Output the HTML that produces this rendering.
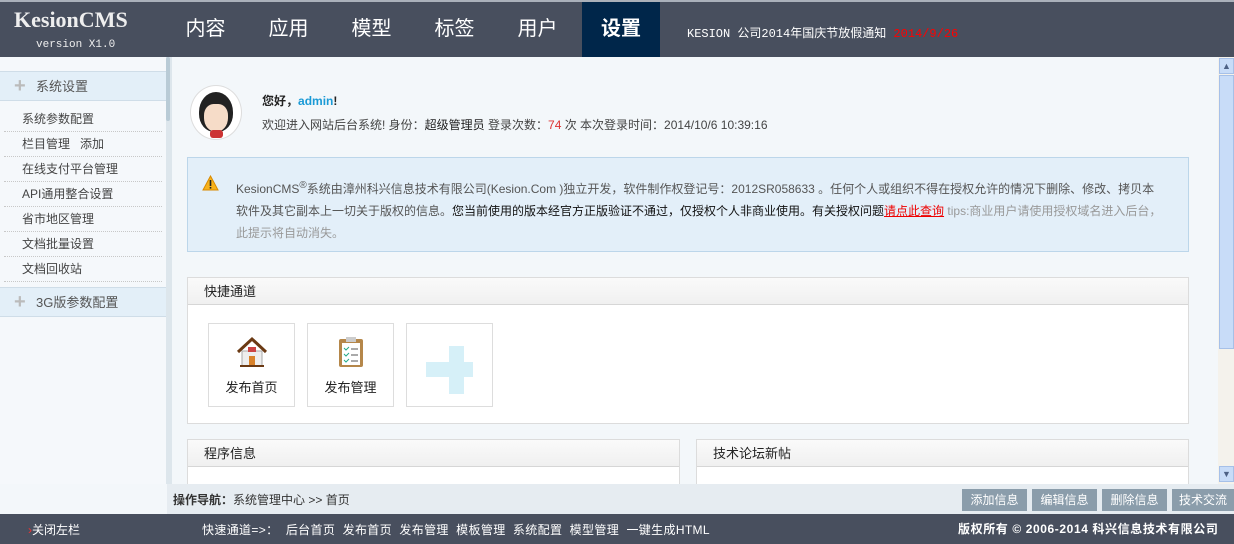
<!DOCTYPE html>
<html><head><meta charset="utf-8">
<style>
*{margin:0;padding:0;box-sizing:border-box}
body{width:1234px;height:544px;overflow:hidden;position:relative;background:#f3f7fa;font-family:"Liberation Sans","Noto Sans CJK SC","WenQuanYi Zen Hei",sans-serif;font-size:12px;color:#333}
.abs{position:absolute}
#top{left:0;top:0;width:1234px;height:57px;background:#484f5e;border-top:2px solid #aab0ba}
.nav{top:0;height:55px;line-height:55px;color:#fff;font-size:20px;text-align:center;width:83px}
#side{left:0;top:57px;width:167px;height:427px;background:#f5f8fb}
.sh{left:0;width:166px;height:30px;line-height:30px;background:#e3eff8;border-top:1px solid #cfdde8;border-bottom:1px solid #cfdde8;font-size:13px;color:#555;padding-left:36px}
.sh:before{content:"+";position:absolute;left:14px;top:-1px;color:#bbb;font-size:20px;font-weight:bold}
.si{left:4px;width:158px;height:25px;line-height:24px;padding-left:18px;border-bottom:1px dotted #c8c8c8;color:#444}
.box{background:#fff;border:1px solid #dcdcdc}
.bh{height:27px;line-height:27px;background:linear-gradient(#fafafa,#f0f0f0);border-bottom:1px solid #d6d6d6;padding-left:16px;font-size:13px;color:#222}
.q{top:323px;width:87px;height:84px;border:1px solid #ddd;background:#fff;text-align:center;font-size:13px;color:#222}
.btn{top:489px;height:22px;line-height:22px;width:65px;background:#8b9dab;color:#fff;text-align:center}
</style></head><body>
<div id="top" class="abs">
 <div class="abs" style="left:14px;top:5px;color:#eee;font-family:'Liberation Serif',serif;font-weight:bold;font-size:22px">KesionCMS</div>
 <div class="abs" style="left:36px;top:37px;color:#eee;font-family:'Liberation Mono',monospace;font-size:11px">version X1.0</div>
 <div class="abs nav" style="left:164px">内容</div>
 <div class="abs nav" style="left:247px">应用</div>
 <div class="abs nav" style="left:330px">模型</div>
 <div class="abs nav" style="left:413px">标签</div>
 <div class="abs nav" style="left:496px">用户</div>
 <div class="abs nav" style="left:582px;width:78px;background:#00264a;font-weight:bold">设置</div>
 <div class="abs" style="left:687px;top:22px;color:#fff;font-size:12px;font-family:'Liberation Mono','Noto Sans CJK SC',monospace">KESION 公司2014年国庆节放假通知 <span style="color:#f00">2014/9/26</span></div>
</div>
<div id="side" class="abs">
 <div class="abs sh" style="top:14px">系统设置</div>
 <div class="abs si" style="top:50px">系统参数配置</div>
 <div class="abs si" style="top:75px">栏目管理 &nbsp; 添加</div>
 <div class="abs si" style="top:100px">在线支付平台管理</div>
 <div class="abs si" style="top:125px">API通用整合设置</div>
 <div class="abs si" style="top:150px">省市地区管理</div>
 <div class="abs si" style="top:175px">文档批量设置</div>
 <div class="abs si" style="top:200px">文档回收站</div>
 <div class="abs sh" style="top:230px">3G版参数配置</div>
</div>
<div class="abs" style="left:166px;top:57px;width:6px;height:427px;background:#dde6ec"></div>
<div class="abs" style="left:166px;top:57px;width:4px;height:64px;background:#b9cbd6;border-radius:2px"></div>
<div class="abs" style="left:190px;top:85px;width:52px;height:55px;border-radius:50%;background:#fff;border:1px solid #ddd"></div>
<div class="abs" style="left:199px;top:92px;width:34px;height:40px;border-radius:50% 50% 45% 45%;background:#222"></div>
<div class="abs" style="left:204px;top:104px;width:24px;height:28px;border-radius:40% 40% 50% 50%;background:#f6dcc8"></div>
<div class="abs" style="left:210px;top:130px;width:13px;height:8px;background:#c33;border-radius:3px"></div>
<div class="abs" style="left:262px;top:92px;font-weight:bold;color:#222">您好，<span style="color:#1a9ad6">admin</span>!</div>
<div class="abs" style="left:262px;top:116px;color:#444">欢迎进入网站后台系统! 身份：<span style="color:#222">超级管理员</span> 登录次数：<span style="color:#d33">74</span> 次 本次登录时间：2014/10/6 10:39:16</div>
<div class="abs" style="left:187px;top:157px;width:1002px;height:95px;background:#e3eff9;border:1px solid #bcd6ea"></div>
<svg class="abs" style="left:202px;top:175px" width="17" height="16"><path d="M8.5 1L16 15H1Z" fill="#f7b21c" stroke="#d98a00"/><rect x="7.7" y="5" width="1.6" height="6" fill="#222"/><rect x="7.7" y="12" width="1.6" height="1.6" fill="#222"/></svg>
<div class="abs" style="left:236px;top:175px;width:936px;line-height:22px;color:#555;font-size:12px">KesionCMS<sup>®</sup>系统由漳州科兴信息技术有限公司(Kesion.Com )独立开发，软件制作权登记号：2012SR058633 。任何个人或组织不得在授权允许的情况下删除、修改、拷贝本<br>软件及其它副本上一切关于版权的信息。<span style="color:#111">您当前使用的版本经官方正版验证不通过，仅授权个人非商业使用。有关授权问题</span><span style="color:#e00;text-decoration:underline">请点此查询</span> <span style="color:#999">tips:商业用户请使用授权域名进入后台，<br>此提示将自动消失。</span></div>
<div class="abs box" style="left:187px;top:277px;width:1002px;height:147px"><div class="bh">快捷通道</div></div>
<div class="abs q" style="left:208px"><svg style="margin-top:12px" width="32" height="32"><path d="M2 16L16 3L30 16" fill="none" stroke="#6b3a14" stroke-width="3"/><rect x="6" y="15" width="20" height="15" fill="#eee" stroke="#aaa"/><rect x="13" y="20" width="6" height="10" fill="#d9822b"/><rect x="12" y="11" width="8" height="5" fill="#c44"/><rect x="4" y="29" width="24" height="2" fill="#6b3a14"/></svg><div style="margin-top:6px">发布首页</div></div>
<div class="abs q" style="left:307px"><svg style="margin-top:12px" width="32" height="32"><rect x="4" y="3" width="24" height="28" fill="#b5874a" rx="2"/><rect x="7" y="7" width="18" height="22" fill="#fff"/><rect x="11" y="1" width="10" height="5" fill="#ccc"/><path d="M9 12l2 2 3-3M9 18l2 2 3-3M9 24l2 2 3-3" stroke="#2a8" fill="none"/><path d="M16 13h7M16 19h7M16 25h7" stroke="#555"/></svg><div style="margin-top:6px">发布管理</div></div>
<div class="abs q" style="left:406px"><div class="abs" style="left:42px;top:22px;width:15px;height:48px;background:#d6f0f8"></div><div class="abs" style="left:19px;top:38px;width:47px;height:15px;background:#d6f0f8"></div></div>
<div class="abs box" style="left:187px;top:439px;width:493px;height:50px"><div class="bh">程序信息</div></div>
<div class="abs box" style="left:696px;top:439px;width:493px;height:50px"><div class="bh">技术论坛新帖</div></div>
<div class="abs" style="left:1218px;top:57px;width:16px;height:427px;background:#f4f2ec"></div>
<div class="abs" style="left:1219px;top:58px;width:15px;height:16px;background:#c8dcf8;border:1px solid #a6c0e8;color:#4d6185;font-size:9px;text-align:center;line-height:14px">▲</div>
<div class="abs" style="left:1219px;top:75px;width:15px;height:274px;background:#c8dcf8;border:1px solid #a6c0e8"></div>
<div class="abs" style="left:1219px;top:466px;width:15px;height:16px;background:#c8dcf8;border:1px solid #a6c0e8;color:#4d6185;font-size:9px;text-align:center;line-height:14px">▼</div>
<div class="abs" style="left:167px;top:484px;width:1067px;height:30px;background:#e6ecf1"></div>
<div class="abs" style="left:173px;top:491px;color:#333"><b>操作导航：</b>系统管理中心 &gt;&gt; 首页</div>
<div class="abs btn" style="left:962px">添加信息</div>
<div class="abs btn" style="left:1032px">编辑信息</div>
<div class="abs btn" style="left:1102px">删除信息</div>
<div class="abs btn" style="left:1172px;width:62px">技术交流</div>
<div class="abs" style="left:0;top:514px;width:1234px;height:30px;background:#484f5e;color:#fff">
 <div class="abs" style="left:28px;top:7px"><span style="color:#e33">›</span>关闭左栏</div>
 <div class="abs" style="left:202px;top:7px;letter-spacing:0.35px">快速通道=&gt;： &nbsp;后台首页 &nbsp;发布首页 &nbsp;发布管理 &nbsp;模板管理 &nbsp;系统配置 &nbsp;模型管理 &nbsp;一键生成HTML</div>
 <div class="abs" style="left:958px;top:6px;font-weight:bold;letter-spacing:0.6px">版权所有 © 2006-2014 科兴信息技术有限公司</div>
</div>
</body></html>
